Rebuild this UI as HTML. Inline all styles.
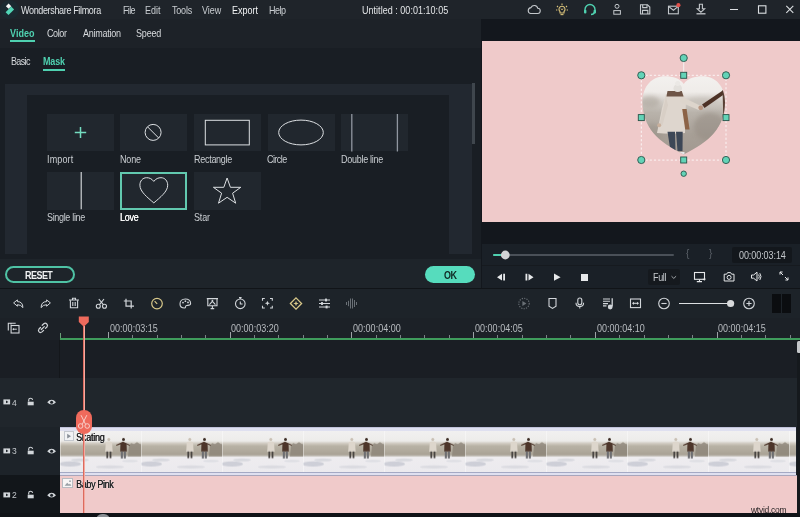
<!DOCTYPE html>
<html><head><meta charset="utf-8">
<style>
*{margin:0;padding:0;box-sizing:border-box}
html,body{width:800px;height:517px;overflow:hidden;background:#1b2026;font-family:"Liberation Sans", sans-serif;color:#d0d4d8}
.a{position:absolute}
.t{position:absolute;white-space:nowrap;line-height:1;will-change:transform;transform:scaleY(1.12);transform-origin:0 0}
svg{position:absolute;overflow:visible}
</style></head><body>
<div class="a" style="left:0px;top:0px;width:800px;height:19px;background:#1f242a;"></div>
<svg style="left:0px;top:0px" width="20" height="19" viewBox="0 0 20 19"><circle cx="9.5" cy="9.5" r="9.5" fill="#1b2930"/><path d="M8.6 3.6 L11.3 6.2 L8.6 8.8 L5.9 6.2 Z" fill="#f4f6f6"/><path d="M11.2 6.6 L14.1 9.4 L8.5 15 L5.6 12.2 Z" fill="#52d6b6"/></svg>
<div class="t" style="left:20.80px;top:5.60px;font-size:9px;color:#dfe2e5;font-weight:400;letter-spacing:-0.346px;">Wondershare Filmora</div>
<div class="t" style="left:122.60px;top:5.60px;font-size:9px;color:#c9cdd1;font-weight:400;letter-spacing:-0.654px;">File</div>
<div class="t" style="left:145.10px;top:5.60px;font-size:9px;color:#c9cdd1;font-weight:400;letter-spacing:-0.029px;">Edit</div>
<div class="t" style="left:171.50px;top:5.60px;font-size:9px;color:#c9cdd1;font-weight:400;letter-spacing:-0.203px;">Tools</div>
<div class="t" style="left:202.10px;top:5.60px;font-size:9px;color:#c9cdd1;font-weight:400;letter-spacing:-0.015px;">View</div>
<div class="t" style="left:231.70px;top:5.60px;font-size:9px;color:#f2f4f5;font-weight:400;letter-spacing:0.014px;">Export</div>
<div class="t" style="left:268.50px;top:5.60px;font-size:9px;color:#c9cdd1;font-weight:400;letter-spacing:-0.529px;">Help</div>
<div class="t" style="left:362.45px;top:5.60px;font-size:9px;color:#e4e6e8;font-weight:400;letter-spacing:0.029px;">Untitled : 00:01:10:05</div>
<svg style="left:526px;top:3px" width="16" height="13" viewBox="0 0 16 13"><path d="M4.5 10.5 H11.5 A2.6 2.6 0 0 0 11.8 5.3 A3.6 3.6 0 0 0 5 4.6 A3 3 0 0 0 4.5 10.5 Z" fill="none" stroke="#c4c8cc" stroke-width="1.1"/></svg>
<svg style="left:554px;top:2px" width="16" height="14" viewBox="0 0 16 14"><g stroke="#d9c27a" stroke-width="1.1" fill="none"><path d="M6 11 V9.5 A3 3 0 1 1 10 9.5 V11 Z"/><path d="M6.5 12.6 H9.5"/><path d="M8 1.5 V3 M3 4 L4 5 M13 4 L12 5 M2 8 H3.3 M12.7 8 H14"/></g><path d="M7 6.5 L8 8 L9 6.5" stroke="#d9c27a" stroke-width="0.8" fill="none"/></svg>
<svg style="left:582px;top:3px" width="16" height="13" viewBox="0 0 16 13"><g stroke="#4fd1b0" stroke-width="1.4" fill="none"><path d="M3 8 V6.5 A5 5 0 0 1 13 6.5 V8"/><path d="M12.5 9 Q12 11.5 9 11.5"/></g><rect x="2" y="6.8" width="2.4" height="3.6" rx="1" fill="#4fd1b0"/><rect x="11.6" y="6.8" width="2.4" height="3.6" rx="1" fill="#4fd1b0"/></svg>
<svg style="left:611px;top:3px" width="12" height="13" viewBox="0 0 12 13"><g stroke="#c4c8cc" stroke-width="1" fill="none"><circle cx="6" cy="3.3" r="2"/><rect x="2.8" y="7.6" width="6.6" height="3.6"/></g></svg>
<svg style="left:638px;top:3px" width="14" height="13" viewBox="0 0 14 13"><g stroke="#c4c8cc" stroke-width="1.1" fill="none"><path d="M2.5 1.8 H9.5 L11.8 4 V11 H2.5 Z"/><path d="M4.7 1.8 V4.6 H9 V1.8"/><path d="M4.5 11 V7.4 H9.8 V11"/></g></svg>
<svg style="left:666px;top:2px" width="16" height="14" viewBox="0 0 16 14"><g stroke="#c4c8cc" stroke-width="1.1" fill="none"><rect x="2.5" y="4.2" width="9.8" height="7.6"/><path d="M2.5 4.4 L7.4 8.3 L12.3 4.4"/></g><circle cx="12.4" cy="3.2" r="2.1" fill="#e0504a"/></svg>
<svg style="left:694px;top:2px" width="14" height="14" viewBox="0 0 14 14"><g stroke="#c4c8cc" stroke-width="1.1" fill="none"><path d="M5.4 2.2 V6.8 H3.2 L6.9 10.2 L10.6 6.8 H8.4 V2.2 Z"/><path d="M2.5 11.8 H11.5" stroke-width="1.3"/></g></svg>
<div class="a" style="left:730px;top:9px;width:8px;height:1.3px;background:#dcdfe2;"></div>
<svg style="left:756px;top:4px" width="12" height="12" viewBox="0 0 12 12"><rect x="2.5" y="1.8" width="7.4" height="7.4" fill="none" stroke="#dcdfe2" stroke-width="1.1"/></svg>
<svg style="left:784px;top:4px" width="12" height="12" viewBox="0 0 12 12"><path d="M2.3 1.8 L9.3 8.8 M9.3 1.8 L2.3 8.8" stroke="#dcdfe2" stroke-width="1.1"/></svg>
<div class="a" style="left:0px;top:19px;width:481px;height:28.5px;background:#1d2228;"></div>
<div class="a" style="left:0px;top:47.5px;width:481px;height:211.5px;background:#191e24;"></div>
<div class="t" style="left:9.90px;top:28.60px;font-size:9px;color:#4fd1b0;font-weight:700;letter-spacing:0.051px;">Video</div>
<div class="a" style="left:10px;top:40px;width:25px;height:2px;background:#4fd1b0;"></div>
<div class="t" style="left:46.90px;top:28.60px;font-size:9px;color:#d6d9dc;font-weight:400;letter-spacing:-0.403px;">Color</div>
<div class="t" style="left:82.60px;top:28.60px;font-size:9px;color:#d6d9dc;font-weight:400;letter-spacing:-0.237px;">Animation</div>
<div class="t" style="left:135.70px;top:28.60px;font-size:9px;color:#d6d9dc;font-weight:400;letter-spacing:-0.166px;">Speed</div>
<div class="t" style="left:11.40px;top:56.60px;font-size:9px;color:#d6d9dc;font-weight:400;letter-spacing:-0.643px;">Basic</div>
<div class="t" style="left:43.30px;top:56.60px;font-size:9px;color:#4fd1b0;font-weight:700;letter-spacing:-0.129px;">Mask</div>
<div class="a" style="left:43px;top:69px;width:22px;height:1.6px;background:#4fd1b0;"></div>
<div class="a" style="left:5px;top:84px;width:467px;height:170px;background:#222830;"></div>
<div class="a" style="left:27px;top:94.5px;width:422px;height:159.5px;background:#191e24;"></div>
<div class="a" style="left:472px;top:83px;width:2.6px;height:61px;background:#3f464d;"></div>
<div class="a" style="left:46.5px;top:114px;width:67px;height:37.4px;background:#21272e;"></div>
<div class="a" style="left:120.2px;top:114px;width:67px;height:37.4px;background:#21272e;"></div>
<div class="a" style="left:194.2px;top:114px;width:67px;height:37.4px;background:#21272e;"></div>
<div class="a" style="left:267.8px;top:114px;width:67px;height:37.4px;background:#21272e;"></div>
<div class="a" style="left:341px;top:114px;width:67px;height:37.4px;background:#21272e;"></div>
<div class="a" style="left:46.5px;top:172.3px;width:67px;height:37.6px;background:#21272e;"></div>
<div class="a" style="left:120.2px;top:172.3px;width:67px;height:37.6px;background:#21272e;"></div>
<div class="a" style="left:194.2px;top:172.3px;width:67px;height:37.6px;background:#21272e;"></div>
<svg style="left:46.5px;top:114px" width="67" height="37" viewBox="0 0 67 37"><path d="M33.5 13 V24 M27.8 18.5 H39.2" stroke="#74dcc0" stroke-width="1.5"/></svg>
<svg style="left:120.2px;top:114px" width="67" height="37" viewBox="0 0 67 37"><circle cx="33.1" cy="18.4" r="8" fill="none" stroke="#dde0e3" stroke-width="1"/><path d="M27.6 12.9 L38.6 23.9" stroke="#dde0e3" stroke-width="1"/></svg>
<svg style="left:194.2px;top:114px" width="67" height="37" viewBox="0 0 67 37"><rect x="11.3" y="6.3" width="44" height="24.6" fill="none" stroke="#dde0e3" stroke-width="1"/></svg>
<svg style="left:267.8px;top:114px" width="67" height="37" viewBox="0 0 67 37"><ellipse cx="33" cy="18.5" rx="22.3" ry="12.4" fill="none" stroke="#dde0e3" stroke-width="1"/></svg>
<svg style="left:341px;top:114px" width="67" height="37" viewBox="0 0 67 37"><path d="M10.8 0 V37.4 M56.4 0 V37.4" stroke="#9096a0" stroke-width="1.3"/></svg>
<svg style="left:46.5px;top:172.3px" width="67" height="37" viewBox="0 0 67 37"><path d="M34.2 0 V37.2" stroke="#dde0e3" stroke-width="1.1"/></svg>
<div class="a" style="left:120.2px;top:172.3px;width:67px;height:37.6px;background:#21272e;border:2px solid #62c9af"></div>
<svg style="left:120.2px;top:172.3px" width="67" height="37" viewBox="0 0 67 37"><path d="M33.8 9.4 C31.8 6.6 29.2 5.7 26.6 5.7 C22.6 5.7 19.9 9 19.9 13.2 C19.9 19.6 27.4 25.4 33.8 30.9 C40.2 25.4 47.7 19.6 47.7 13.2 C47.7 9 45 5.7 41 5.7 C38.4 5.7 35.8 6.6 33.8 9.4 Z" fill="none" stroke="#dde0e3" stroke-width="1"/></svg>
<svg style="left:194.2px;top:172.3px" width="67" height="37" viewBox="0 0 67 37"><path d="M33.1 6 L36.4 15.3 L46.8 15.3 L38.6 21.2 L41.7 31.2 L33.1 25.3 L24.5 31.2 L27.6 21.2 L19.4 15.3 L29.8 15.3 Z" fill="none" stroke="#dde0e3" stroke-width="1"/></svg>
<div class="t" style="left:46.70px;top:154.60px;font-size:9px;color:#c9cdd1;font-weight:400;letter-spacing:0.131px;">Import</div>
<div class="t" style="left:120.20px;top:154.60px;font-size:9px;color:#c9cdd1;font-weight:400;letter-spacing:-0.129px;">None</div>
<div class="t" style="left:193.50px;top:154.60px;font-size:9px;color:#c9cdd1;font-weight:400;letter-spacing:-0.281px;">Rectangle</div>
<div class="t" style="left:267.40px;top:154.60px;font-size:9px;color:#c9cdd1;font-weight:400;letter-spacing:-0.569px;">Circle</div>
<div class="t" style="left:340.80px;top:154.60px;font-size:9px;color:#c9cdd1;font-weight:400;letter-spacing:-0.276px;">Double line</div>
<div class="t" style="left:46.70px;top:212.60px;font-size:9px;color:#c9cdd1;font-weight:400;letter-spacing:-0.330px;">Single line</div>
<div class="t" style="left:120.00px;top:212.60px;font-size:9px;color:#ffffff;font-weight:400;letter-spacing:-0.258px;text-shadow:0 0 0.2px #fff">Love</div>
<div class="t" style="left:193.50px;top:212.60px;font-size:9px;color:#c9cdd1;font-weight:400;letter-spacing:-0.154px;">Star</div>
<div class="a" style="left:0px;top:259px;width:481px;height:29px;background:#1e242a;"></div>
<div class="a" style="left:4.5px;top:266px;width:70px;height:16.5px;background:transparent;border:2px solid #4fc3a5;border-radius:9px"></div>
<div class="t" style="left:25.45px;top:270.60px;font-size:9px;color:#f0f2f3;font-weight:700;letter-spacing:-0.543px;">RESET</div>
<div class="a" style="left:424.8px;top:265.9px;width:50.4px;height:16.9px;background:#56dcbd;border-radius:9px"></div>
<div class="t" style="left:443.60px;top:270.60px;font-size:9px;color:#0f2a24;font-weight:700;letter-spacing:-0.450px;">OK</div>
<div class="a" style="left:481px;top:19px;width:319px;height:270px;background:#13171d;"></div>
<div class="a" style="left:482px;top:41px;width:318px;height:181px;background:#efcaca;"></div>
<div class="a" style="left:482px;top:244px;width:318px;height:44px;background:#1a2027;"></div>
<div class="a" style="left:482px;top:265px;width:318px;height:1px;background:#161a1f;"></div>
<div class="a" style="left:493px;top:254px;width:181px;height:2px;background:#4a5058;border-radius:1px"></div>
<div class="a" style="left:493px;top:254px;width:12px;height:2px;background:#4fd1b0;border-radius:1px"></div>
<svg style="left:500px;top:250px" width="11" height="11" viewBox="0 0 11 11"><circle cx="5.3" cy="5" r="4.4" fill="#d2d4d6"/></svg>
<div class="t" style="left:685.70px;top:248.40px;font-size:10px;color:#5a6068;font-weight:400;letter-spacing:1.456px;">{</div>
<div class="t" style="left:708.70px;top:248.40px;font-size:10px;color:#5a6068;font-weight:400;letter-spacing:1.456px;">}</div>
<div class="a" style="left:731.6px;top:247px;width:60.4px;height:15.5px;background:#13171c;border-radius:2px"></div>
<div class="t" style="left:738.70px;top:250.60px;font-size:9px;color:#c4c8cc;font-weight:400;letter-spacing:-0.068px;">00:00:03:14</div>
<svg style="left:496px;top:273px" width="12" height="9" viewBox="0 0 12 9"><path d="M1 4.2 L6 0.8 V7.6 Z M7.2 0.8 H9 V7.6 H7.2 Z" fill="#e6e8ea"/></svg>
<svg style="left:525px;top:273px" width="12" height="9" viewBox="0 0 12 9"><path d="M0.5 0.8 H2.3 V7.6 H0.5 Z M3.5 0.8 L8.5 4.2 L3.5 7.6 Z" fill="#e6e8ea"/></svg>
<svg style="left:553px;top:273px" width="10" height="9" viewBox="0 0 10 9"><path d="M1 0.6 L7.6 4.2 L1 7.8 Z" fill="#e6e8ea"/></svg>
<div class="a" style="left:581px;top:273.5px;width:7.2px;height:7.2px;background:#e6e8ea;"></div>
<div class="a" style="left:648px;top:269px;width:32px;height:16px;background:#15191e;border-radius:2px"></div>
<div class="t" style="left:653.30px;top:272.60px;font-size:9px;color:#c4c8cc;font-weight:400;letter-spacing:-0.329px;">Full</div>
<svg style="left:670px;top:275px" width="8" height="5" viewBox="0 0 8 5"><path d="M1.5 1.2 L3.8 3.4 L6.1 1.2" stroke="#b0b4b8" stroke-width="0.9" fill="none"/></svg>
<svg style="left:693px;top:271px" width="14" height="12" viewBox="0 0 14 12"><g stroke="#e6e8ea" stroke-width="1.1" fill="none"><rect x="1.5" y="1.5" width="10" height="6.8"/><path d="M6.5 8.4 V10.4 M3.8 10.6 H9"/></g><path d="M9.6 7.8 L13 7.8 L11.3 9.8 Z" fill="#e6e8ea"/></svg>
<svg style="left:723px;top:271px" width="12" height="11" viewBox="0 0 12 11"><g stroke="#e6e8ea" stroke-width="1" fill="none"><path d="M1.2 3.2 H3.6 L4.6 1.6 H7.6 L8.6 3.2 H11 V10 H1.2 Z"/><circle cx="6.1" cy="6.4" r="2"/></g></svg>
<svg style="left:750px;top:271px" width="12" height="11" viewBox="0 0 12 11"><g stroke="#e6e8ea" stroke-width="1" fill="none"><path d="M1.5 4 H3.6 L7 1.2 V10 L3.6 7.2 H1.5 Z"/><path d="M8.6 3.6 Q10 5.6 8.6 7.6 M9.8 2.2 Q12.2 5.6 9.8 9"/></g></svg>
<svg style="left:778px;top:270px" width="12" height="12" viewBox="0 0 12 12"><g stroke="#e6e8ea" stroke-width="1" fill="none"><path d="M2 2 L5 5 M2 2 H4.6 M2 2 V4.6 M10 10 L7 7 M10 10 H7.4 M10 10 V7.4"/></g></svg>
<svg style="left:638px;top:72px" width="92" height="90" viewBox="0 0 92 90">
<defs>
<clipPath id="hc"><path d="M45.75 12 C42 6.2 35 4.2 27 4.2 C14 4.2 4.5 14 4.5 30 C4.5 55 20 70 45.75 82.4 C71.5 70 87 55 87 30 C87 14 77.5 4.2 64.5 4.2 C56.5 4.2 49.5 6.2 45.75 12 Z"/></clipPath>
<linearGradient id="sky" x1="0" y1="0" x2="0" y2="1"><stop offset="0" stop-color="#f4f2f0"/><stop offset="0.22" stop-color="#efece9"/><stop offset="0.33" stop-color="#d3cec8"/><stop offset="0.45" stop-color="#b9b3ab"/><stop offset="0.7" stop-color="#a79f96"/><stop offset="1" stop-color="#a0978e"/></linearGradient>
<filter id="bl" x="-20%" y="-20%" width="140%" height="140%"><feGaussianBlur stdDeviation="0.6"/></filter>
<filter id="bl2" x="-50%" y="-50%" width="200%" height="200%"><feGaussianBlur stdDeviation="2.2"/></filter>
</defs>
<g clip-path="url(#hc)">
<rect x="0" y="0" width="92" height="90" fill="url(#sky)"/>
<g filter="url(#bl2)" opacity="0.6"><ellipse cx="12" cy="30" rx="10" ry="6" fill="#aca59c"/><ellipse cx="64" cy="29" rx="16" ry="4" fill="#c0bab3"/><ellipse cx="72" cy="55" rx="16" ry="14" fill="#978e85"/><ellipse cx="14" cy="62" rx="10" ry="10" fill="#9c948b"/></g>
<g filter="url(#bl)">
<path d="M28 22 Q36 20 45 22 L48 27 L47 61 Q33 62.5 19 61 L24 36 Z" fill="#ded6ce"/>
<path d="M28 25 L21.5 52 L24.5 53 L30 33 Z" fill="#d8cfc6"/>
<circle cx="21.2" cy="53.2" r="2" fill="#c9b09c"/>
<path d="M43.5 24.5 L63 34 L61.3 38.2 L42 30 Z" fill="#ddd5cc"/>
<path d="M29.5 19 L43.8 19 L45.5 24.5 L28.5 24.5 Z" fill="#6e5446"/>
<ellipse cx="39.7" cy="16.2" rx="4.2" ry="3.8" fill="#e3e0dc"/>
<circle cx="39.7" cy="11.4" r="2.5" fill="#ebe8e5"/>
<path d="M44.2 37 L48.6 37 L51.6 57.5 L47.2 57.5 Z" fill="#8c6446"/>
<path d="M29.5 59.7 L37 59.7 L37.5 79 L32.5 79 Z M38 59.7 L44.7 59.7 L44.5 79 L39.5 79 Z" fill="#3d4656"/>
<path d="M40 80 L46.5 80 L46.5 84 L40 84 Z" fill="#e6e6e8"/>
<path d="M85.5 18 L88 21 L66.5 36 L64 32.5 Z" fill="#4e3328"/>
<path d="M84.5 18 L89 18 L89 52 L85.5 52 Z" fill="#5a4035"/>
<circle cx="62.7" cy="35.8" r="2.4" fill="#b99580"/>
</g>
</g>
</svg>
<svg style="left:630px;top:50px" width="110" height="130" viewBox="0 0 110 130">
<rect x="11.3" y="25.3" width="84.7" height="84.8" fill="none" stroke="#ffffff" stroke-width="0.9" stroke-dasharray="2.2 2" opacity="0.9"/>
<path d="M53.7 8 V25" stroke="#f5f5f5" stroke-width="0.9"/>
<g fill="#63d3b7" stroke="#275449" stroke-width="0.9">
<circle cx="11.3" cy="25.3" r="3.6"/><circle cx="96" cy="25.3" r="3.6"/><circle cx="11.3" cy="110" r="3.6"/><circle cx="96" cy="110" r="3.6"/>
<circle cx="53.7" cy="8" r="3.6"/><circle cx="53.7" cy="123.7" r="2.7"/>
<rect x="50.7" y="22.3" width="6" height="6"/><rect x="50.7" y="107" width="6" height="6"/>
<rect x="8.3" y="64.6" width="6" height="6"/><rect x="93" y="64.6" width="6" height="6"/>
</g></svg>
<div class="a" style="left:0px;top:288px;width:800px;height:1px;background:#111418;"></div>
<div class="a" style="left:0px;top:289px;width:800px;height:29px;background:#1d2329;"></div>
<svg style="left:12px;top:299px" width="13" height="10" viewBox="0 0 13 10"><path d="M1.6 3.9 L5.4 0.9 V2.6 Q10.8 2.6 10.9 8.6 Q9 5.7 5.4 5.7 V7.2 Z" stroke="#d2d6da" stroke-width="1" fill="none" stroke-linejoin="round"/></svg>
<svg style="left:39px;top:299px" width="13" height="10" viewBox="0 0 13 10"><path d="M11.4 3.9 L7.6 0.9 V2.6 Q2.2 2.6 2.1 8.6 Q4 5.7 7.6 5.7 V7.2 Z" stroke="#d2d6da" stroke-width="1" fill="none" stroke-linejoin="round"/></svg>
<svg style="left:68px;top:297px" width="12" height="12" viewBox="0 0 12 12"><g stroke="#d2d6da" stroke-width="1.1" fill="none"><path d="M1 3 H11 M4.5 3 V1.3 H7.5 V3"/><path d="M2.4 3.2 V10.8 H9.6 V3.2"/><path d="M4.8 5 V9 M7.2 5 V9"/></g></svg>
<svg style="left:95px;top:298px" width="13" height="11" viewBox="0 0 13 11"><g stroke="#d2d6da" stroke-width="1.1" fill="none"><circle cx="3.3" cy="8.2" r="2"/><circle cx="9.5" cy="8.2" r="2"/><path d="M4.5 6.6 L9 1 M8.3 6.6 L3.8 1"/></g></svg>
<svg style="left:123px;top:298px" width="12" height="11" viewBox="0 0 12 11"><g stroke="#d2d6da" stroke-width="1.2" fill="none"><path d="M3 0.8 V8.2 H11 M0.8 3 H8.2 V10.5"/></g></svg>
<svg style="left:150px;top:297px" width="14" height="13" viewBox="0 0 14 13"><g stroke="#d9c98a" stroke-width="1.2" fill="none"><circle cx="7" cy="6.6" r="5.3"/><path d="M4.6 4.2 L7.2 6.8"/></g></svg>
<svg style="left:179px;top:298px" width="13" height="11" viewBox="0 0 13 11"><g stroke="#d2d6da" stroke-width="1.1" fill="none"><path d="M6.4 1 C3 1 1 3.3 1 6 C1 8.6 3 10 5.6 10 C7 10 6.2 8.2 7.2 7.6 C8.2 7 11.6 8.2 11.6 5.4 C11.6 2.8 9.4 1 6.4 1 Z"/></g><circle cx="4" cy="4.6" r="0.9" fill="#d2d6da"/><circle cx="6.4" cy="3.2" r="0.9" fill="#d2d6da"/><circle cx="9" cy="4.4" r="0.9" fill="#d2d6da"/></svg>
<svg style="left:206px;top:297px" width="13" height="13" viewBox="0 0 13 13"><g stroke="#d2d6da" stroke-width="1.1" fill="none"><path d="M0.8 1.6 H12 M1.8 1.6 V8.8 H11 V1.6"/><path d="M6.4 9 V11.6 M4.6 11.6 H8.2"/><path d="M3.4 7.6 L6.4 4.4 L9.4 7.6"/></g><circle cx="6.4" cy="3.6" r="0.9" fill="#d2d6da"/></svg>
<svg style="left:234px;top:296px" width="13" height="14" viewBox="0 0 13 14"><g stroke="#d2d6da" stroke-width="1.1" fill="none"><circle cx="6.3" cy="7.8" r="4.8"/><path d="M5 1.6 H7.6 M6.3 1.6 V3 M6.3 5.4 V8 H8.6"/></g></svg>
<svg style="left:261px;top:297px" width="13" height="12" viewBox="0 0 13 12"><g stroke="#d2d6da" stroke-width="1.1" fill="none"><path d="M1.5 3.8 V1.5 H3.8 M9 1.5 H11.3 V3.8 M11.3 8.8 V11 H9 M3.8 11 H1.5 V8.8"/></g><path d="M6.4 3.8 L7.1 5.6 L8.9 6.3 L7.1 7 L6.4 8.8 L5.7 7 L3.9 6.3 L5.7 5.6 Z" fill="#d2d6da"/></svg>
<svg style="left:289px;top:297px" width="14" height="13" viewBox="0 0 14 13"><path d="M7 0.9 L12.6 6.5 L7 12.1 L1.4 6.5 Z" stroke="#d9c98a" stroke-width="1.3" fill="none"/><path d="M7 3.8 L7.7 5.8 L9.7 6.5 L7.7 7.2 L7 9.2 L6.3 7.2 L4.3 6.5 L6.3 5.8 Z" fill="#d9c98a"/></svg>
<svg style="left:318px;top:298px" width="13" height="11" viewBox="0 0 13 11"><g stroke="#d2d6da" stroke-width="1.1"><path d="M1 2 H12 M1 5.5 H12 M1 9 H12"/></g><g fill="#d2d6da"><rect x="7" y="0.6" width="2" height="2.8"/><rect x="3" y="4.1" width="2" height="2.8"/><rect x="7.6" y="7.6" width="2" height="2.8"/></g></svg>
<svg style="left:345px;top:297px" width="13" height="13" viewBox="0 0 13 13"><g stroke="#6a7076" stroke-width="1"><path d="M1.5 5 V8 M3.5 3.8 V9.2 M5.5 1.5 V11.5 M7.5 1.5 V11.5 M9.5 3 V10 M11.5 5 V8"/></g></svg>
<svg style="left:517px;top:297px" width="14" height="13" viewBox="0 0 14 13"><circle cx="7" cy="6.5" r="5.2" stroke="#6a7076" stroke-width="1.1" stroke-dasharray="1.2 1.2" fill="none"/><path d="M5.4 4.1 L9.4 6.5 L5.4 8.9 Z" fill="#6a7076"/></svg>
<svg style="left:547px;top:297px" width="11" height="13" viewBox="0 0 11 13"><path d="M2 1.5 H9 V9.2 L5.5 11.4 L2 9.2 Z" stroke="#d2d6da" stroke-width="1.1" fill="none"/></svg>
<svg style="left:574px;top:297px" width="12" height="13" viewBox="0 0 12 13"><g stroke="#d2d6da" stroke-width="1.1" fill="none"><rect x="3.8" y="1" width="4" height="6.8" rx="2"/><path d="M2 5.8 Q2 9.6 5.8 9.6 Q9.6 9.6 9.6 5.8 M5.8 9.6 V11.5"/></g></svg>
<svg style="left:602px;top:297px" width="12" height="13" viewBox="0 0 12 13"><g stroke="#d2d6da" stroke-width="1.1"><path d="M1 2 H8 M1 4.3 H8 M1 6.6 H6 M1 8.9 H4.5"/><path d="M10.2 1.2 V9.5" stroke-width="1.3"/></g><circle cx="8.2" cy="10" r="2.4" fill="#d2d6da"/></svg>
<svg style="left:629px;top:297px" width="13" height="13" viewBox="0 0 13 13"><g stroke="#d2d6da" stroke-width="1.1" fill="none"><rect x="1.5" y="2" width="10" height="8.6"/></g><path d="M3.6 6.3 H9.4" stroke="#d2d6da" stroke-width="1.1"/><path d="M3.2 6.3 L5 4.7 V7.9 Z M9.8 6.3 L8 4.7 V7.9 Z" fill="#d2d6da"/></svg>
<svg style="left:657px;top:297px" width="14" height="14" viewBox="0 0 14 14"><circle cx="7" cy="6.5" r="5.3" stroke="#d2d6da" stroke-width="1.1" fill="none"/><path d="M4.4 6.5 H9.6" stroke="#d2d6da" stroke-width="1.1"/></svg>
<div class="a" style="left:679px;top:302.5px;width:52px;height:1.3px;background:#dcdfe2;"></div>
<svg style="left:726px;top:299px" width="9" height="9" viewBox="0 0 9 9"><circle cx="4.6" cy="4.5" r="3.6" fill="#d8dadc"/></svg>
<svg style="left:742px;top:297px" width="14" height="14" viewBox="0 0 14 14"><circle cx="7" cy="6.5" r="5.3" stroke="#d2d6da" stroke-width="1.1" fill="none"/><path d="M4.4 6.5 H9.6 M7 3.9 V9.1" stroke="#d2d6da" stroke-width="1.1"/></svg>
<div class="a" style="left:772px;top:293.8px;width:9.3px;height:19px;background:#0b0d10;"></div>
<div class="a" style="left:782.3px;top:293.8px;width:9px;height:19px;background:#0b0d10;"></div>
<div class="a" style="left:0px;top:318px;width:800px;height:22px;background:#1c2127;"></div>
<svg style="left:6px;top:321px" width="16" height="14" viewBox="0 0 16 14"><g stroke="#d2d6da" stroke-width="1.1" fill="none"><path d="M5 3.5 V2.3 H9.7 M2.3 9.6 V2.3 H5"/><rect x="5.1" y="4.5" width="7.9" height="7.5" fill="#1b2026"/></g><path d="M6.8 8.2 H10.8" stroke="#d2d6da" stroke-width="1"/><path d="M6.4 8.2 L8 7 V9.4 Z" fill="#d2d6da"/></svg>
<svg style="left:37px;top:322px" width="12" height="12" viewBox="0 0 12 12"><g stroke="#d2d6da" stroke-width="1.2" fill="none" stroke-linecap="round"><path d="M5.2 3.3 L6.8 1.8 Q8.4 0.6 9.8 2 Q11.2 3.4 9.9 5 L8.4 6.4"/><path d="M3.5 5.5 L2 7 Q0.8 8.6 2.1 9.9 Q3.5 11.2 5 9.9 L6.6 8.4"/><path d="M4.3 7.5 L7.3 4.6"/></g></svg>
<div class="a" style="left:60px;top:338px;width:740px;height:1.6px;background:#3f9c5c;"></div>
<div class="a" style="left:107.8px;top:332px;width:1.1px;height:6px;background:#9ea3a8;"></div>
<div class="a" style="left:132.15px;top:334.5px;width:1px;height:3.3px;background:#7d8388;"></div>
<div class="a" style="left:156.5px;top:334.5px;width:1px;height:3.3px;background:#7d8388;"></div>
<div class="a" style="left:180.85000000000002px;top:334.5px;width:1px;height:3.3px;background:#7d8388;"></div>
<div class="a" style="left:205.2px;top:334.5px;width:1px;height:3.3px;background:#7d8388;"></div>
<div class="t" style="left:109.50px;top:323.60px;font-size:9px;color:#b8bcc0;font-weight:400;letter-spacing:0.023px;">00:00:03:15</div>
<div class="a" style="left:229.55px;top:332px;width:1.1px;height:6px;background:#9ea3a8;"></div>
<div class="a" style="left:253.9px;top:334.5px;width:1px;height:3.3px;background:#7d8388;"></div>
<div class="a" style="left:278.25px;top:334.5px;width:1px;height:3.3px;background:#7d8388;"></div>
<div class="a" style="left:302.6px;top:334.5px;width:1px;height:3.3px;background:#7d8388;"></div>
<div class="a" style="left:326.95000000000005px;top:334.5px;width:1px;height:3.3px;background:#7d8388;"></div>
<div class="t" style="left:231.25px;top:323.60px;font-size:9px;color:#b8bcc0;font-weight:400;letter-spacing:0.023px;">00:00:03:20</div>
<div class="a" style="left:351.3px;top:332px;width:1.1px;height:6px;background:#9ea3a8;"></div>
<div class="a" style="left:375.65000000000003px;top:334.5px;width:1px;height:3.3px;background:#7d8388;"></div>
<div class="a" style="left:400.0px;top:334.5px;width:1px;height:3.3px;background:#7d8388;"></div>
<div class="a" style="left:424.35px;top:334.5px;width:1px;height:3.3px;background:#7d8388;"></div>
<div class="a" style="left:448.70000000000005px;top:334.5px;width:1px;height:3.3px;background:#7d8388;"></div>
<div class="t" style="left:353.00px;top:323.60px;font-size:9px;color:#b8bcc0;font-weight:400;letter-spacing:0.023px;">00:00:04:00</div>
<div class="a" style="left:473.05px;top:332px;width:1.1px;height:6px;background:#9ea3a8;"></div>
<div class="a" style="left:497.40000000000003px;top:334.5px;width:1px;height:3.3px;background:#7d8388;"></div>
<div class="a" style="left:521.75px;top:334.5px;width:1px;height:3.3px;background:#7d8388;"></div>
<div class="a" style="left:546.1px;top:334.5px;width:1px;height:3.3px;background:#7d8388;"></div>
<div class="a" style="left:570.45px;top:334.5px;width:1px;height:3.3px;background:#7d8388;"></div>
<div class="t" style="left:474.75px;top:323.60px;font-size:9px;color:#b8bcc0;font-weight:400;letter-spacing:0.023px;">00:00:04:05</div>
<div class="a" style="left:594.8px;top:332px;width:1.1px;height:6px;background:#9ea3a8;"></div>
<div class="a" style="left:619.15px;top:334.5px;width:1px;height:3.3px;background:#7d8388;"></div>
<div class="a" style="left:643.5px;top:334.5px;width:1px;height:3.3px;background:#7d8388;"></div>
<div class="a" style="left:667.8499999999999px;top:334.5px;width:1px;height:3.3px;background:#7d8388;"></div>
<div class="a" style="left:692.1999999999999px;top:334.5px;width:1px;height:3.3px;background:#7d8388;"></div>
<div class="t" style="left:596.50px;top:323.60px;font-size:9px;color:#b8bcc0;font-weight:400;letter-spacing:0.023px;">00:00:04:10</div>
<div class="a" style="left:716.55px;top:332px;width:1.1px;height:6px;background:#9ea3a8;"></div>
<div class="a" style="left:740.9px;top:334.5px;width:1px;height:3.3px;background:#7d8388;"></div>
<div class="a" style="left:765.25px;top:334.5px;width:1px;height:3.3px;background:#7d8388;"></div>
<div class="a" style="left:789.5999999999999px;top:334.5px;width:1px;height:3.3px;background:#7d8388;"></div>
<div class="a" style="left:813.9499999999999px;top:334.5px;width:1px;height:3.3px;background:#7d8388;"></div>
<div class="t" style="left:718.25px;top:323.60px;font-size:9px;color:#b8bcc0;font-weight:400;letter-spacing:0.023px;">00:00:04:15</div>
<div class="a" style="left:59.5px;top:334.5px;width:1px;height:3.3px;background:#7d8388;"></div>
<div class="a" style="left:83.4px;top:334.5px;width:1px;height:3.3px;background:#7d8388;"></div>
<div class="a" style="left:60px;top:333px;width:1px;height:5px;background:#6a9f78;"></div>
<div class="a" style="left:0px;top:340px;width:797px;height:38px;background:#1a1e24;"></div>
<div class="a" style="left:59px;top:340px;width:1px;height:38px;background:#14171b;"></div>
<div class="a" style="left:0px;top:378px;width:797px;height:49px;background:#20262c;"></div>
<div class="a" style="left:0px;top:427px;width:60px;height:48px;background:#1d2329;"></div>
<div class="a" style="left:0px;top:475px;width:60px;height:38px;background:#12161a;"></div>
<div class="a" style="left:797px;top:340px;width:3px;height:173px;background:#15191d;"></div>
<div class="a" style="left:797px;top:340.5px;width:3px;height:12.2px;background:#c4c7ca;border-radius:1.5px 0 0 1.5px"></div>
<div class="a" style="left:0px;top:513px;width:800px;height:4px;background:#101317;"></div>
<div class="a" style="left:96px;top:513.5px;width:14px;height:6px;background:#8a8f94;border-radius:7px 7px 0 0"></div>
<svg style="left:2px;top:398.3px" width="10" height="8" viewBox="0 0 10 8"><rect x="1.4" y="1.4" width="6.7" height="5" fill="#d2d6da"/><path d="M4 2.6 L6.4 3.9 L4 5.2 Z" fill="#1d2329"/></svg>
<div class="t" style="left:11.90px;top:397.65px;font-size:8.5px;color:#c4c8cc;font-weight:400;letter-spacing:-0.334px;">4</div>
<svg style="left:26px;top:397.3px" width="9" height="10" viewBox="0 0 9 10"><path d="M2.7 4.6 V3.1 Q2.7 1.3 4.6 1.3 Q6.3 1.3 6.6 2.8" stroke="#d2d6da" stroke-width="1.1" fill="none"/><rect x="1.7" y="4.7" width="6" height="3.6" fill="#d2d6da"/></svg>
<svg style="left:46px;top:398.3px" width="11" height="9" viewBox="0 0 11 9"><path d="M1.2 4.2 Q5.6 -0.6 10 4.2 Q5.6 9 1.2 4.2 Z" fill="#d2d6da"/><circle cx="5.6" cy="4.2" r="1.5" fill="#1d2329"/></svg>
<svg style="left:2px;top:447px" width="10" height="8" viewBox="0 0 10 8"><rect x="1.4" y="1.4" width="6.7" height="5" fill="#d2d6da"/><path d="M4 2.6 L6.4 3.9 L4 5.2 Z" fill="#1d2329"/></svg>
<div class="t" style="left:11.90px;top:446.35px;font-size:8.5px;color:#c4c8cc;font-weight:400;letter-spacing:-0.334px;">3</div>
<svg style="left:26px;top:446px" width="9" height="10" viewBox="0 0 9 10"><path d="M2.7 4.6 V3.1 Q2.7 1.3 4.6 1.3 Q6.3 1.3 6.6 2.8" stroke="#d2d6da" stroke-width="1.1" fill="none"/><rect x="1.7" y="4.7" width="6" height="3.6" fill="#d2d6da"/></svg>
<svg style="left:46px;top:447px" width="11" height="9" viewBox="0 0 11 9"><path d="M1.2 4.2 Q5.6 -0.6 10 4.2 Q5.6 9 1.2 4.2 Z" fill="#d2d6da"/><circle cx="5.6" cy="4.2" r="1.5" fill="#1d2329"/></svg>
<svg style="left:2px;top:491px" width="10" height="8" viewBox="0 0 10 8"><rect x="1.4" y="1.4" width="6.7" height="5" fill="#d2d6da"/><path d="M4 2.6 L6.4 3.9 L4 5.2 Z" fill="#1d2329"/></svg>
<div class="t" style="left:11.90px;top:490.35px;font-size:8.5px;color:#c4c8cc;font-weight:400;letter-spacing:-0.334px;">2</div>
<svg style="left:26px;top:490px" width="9" height="10" viewBox="0 0 9 10"><path d="M2.7 4.6 V3.1 Q2.7 1.3 4.6 1.3 Q6.3 1.3 6.6 2.8" stroke="#d2d6da" stroke-width="1.1" fill="none"/><rect x="1.7" y="4.7" width="6" height="3.6" fill="#d2d6da"/></svg>
<svg style="left:46px;top:491px" width="11" height="9" viewBox="0 0 11 9"><path d="M1.2 4.2 Q5.6 -0.6 10 4.2 Q5.6 9 1.2 4.2 Z" fill="#d2d6da"/><circle cx="5.6" cy="4.2" r="1.5" fill="#1d2329"/></svg>
<div class="a" style="left:60px;top:427px;width:736px;height:48px;background:#dfe0f0;"></div>
<div class="a" style="left:60px;top:427px;width:736px;height:0.8px;background:#c0c2da;"></div>
<svg style="left:60px;top:430.5px" width="736" height="41.5" viewBox="0 0 736 41.5"><defs><linearGradient id="tg" x1="0" y1="0" x2="0" y2="1"><stop offset="0" stop-color="#f1f0f0"/><stop offset="0.24" stop-color="#edecea"/><stop offset="0.29" stop-color="#d4cfc6"/><stop offset="0.36" stop-color="#b8b2a5"/><stop offset="0.56" stop-color="#aaa396"/><stop offset="0.6" stop-color="#bcb7ae"/><stop offset="0.625" stop-color="#eeecef"/><stop offset="1" stop-color="#ebeaee"/></linearGradient><filter id="tb" x="-10%" y="-10%" width="120%" height="120%"><feGaussianBlur stdDeviation="0.5"/></filter><pattern id="thumb" x="0" y="0" width="81" height="41.5" patternUnits="userSpaceOnUse"><rect width="81" height="41.5" fill="url(#tg)"/><g filter="url(#tb)"><path d="M69 15 L71 12 L74 13 L77 11 L80 13 L81 13 V25.5 H68 Z" fill="#8a8175" opacity="0.75"/><ellipse cx="10" cy="33" rx="11" ry="2.6" fill="#b4b8c4" opacity="0.55"/><ellipse cx="20" cy="29" rx="9" ry="1.5" fill="#c4c7d0" opacity="0.5"/><ellipse cx="50" cy="36" rx="14" ry="1.6" fill="#c9ccd4" opacity="0.5"/><ellipse cx="70" cy="30" rx="8" ry="1.2" fill="#cdd0d8" opacity="0.5"/><rect x="0" y="0" width="1" height="41.5" fill="#ffffff" opacity="0.4"/><path d="M45.8 11 Q49 9.6 52 11 L52.6 20.8 L45.2 20.8 Z" fill="#ddd6cc"/><circle cx="48.8" cy="8.4" r="1.5" fill="#c9c0b4"/><path d="M46.4 20.6 H48.2 V27.2 H46.4 Z M49.6 20.6 H51.4 V27.2 H49.6 Z" fill="#4a4442"/><path d="M56 13.8 L63 10.6 L70 13.8 L69.5 14.8 L66.6 13.4 L66.8 20.5 L60.2 20.5 L60.4 13.4 L56.5 14.8 Z" fill="#4d362c"/><circle cx="63.5" cy="8.4" r="1.5" fill="#3c2c26"/><path d="M60.8 20.4 H62.9 V27.4 H60.8 Z M63.8 20.4 H65.9 V27.4 H63.8 Z" fill="#6e6e72"/></g></pattern></defs><rect width="736" height="41.5" fill="url(#thumb)"/></svg>
<div class="a" style="left:63.5px;top:431px;width:10.5px;height:10px;background:#f2f3f5;border:0.6px solid #c4c8ce"></div>
<svg style="left:65px;top:433px" width="8" height="7" viewBox="0 0 8 7"><path d="M2.2 0.8 L6 3.2 L2.2 5.6 Z" fill="#8a9098"/></svg>
<div class="t" style="left:76.10px;top:432.60px;font-size:9px;color:#1e1e20;font-weight:400;letter-spacing:-0.233px;text-shadow:0.35px 0 0 #1e1e20,0 0 1px #fff,0 0 1px #fff">Skating</div>
<div class="a" style="left:60px;top:471.8px;width:736px;height:0.7px;background:#a4a9c4;"></div>
<div class="a" style="left:60px;top:475px;width:737px;height:38px;background:#f0caca;"></div>
<div class="a" style="left:60px;top:474.9px;width:737px;height:0.9px;background:#a8a6bc;"></div>
<div class="a" style="left:62.3px;top:477.5px;width:10.4px;height:10.2px;background:#f8f6f6;border:0.6px solid #b8bcc2"></div>
<svg style="left:63px;top:479px" width="9" height="8" viewBox="0 0 9 8"><path d="M1.6 6.8 L4.2 3.8 L6 5.6 L7 4.6 L8.4 6.8 Z" fill="#9aa0a6"/><circle cx="7" cy="2.2" r="0.9" fill="#9aa0a6"/></svg>
<div class="t" style="left:75.70px;top:479.60px;font-size:9px;color:#1e1e20;font-weight:400;letter-spacing:-0.370px;text-shadow:0.35px 0 0 #1e1e20,0 0 1px #fff,0 0 1px #fff">Baby Pink</div>
<div class="t" style="left:751.00px;top:505.35px;font-size:8.5px;color:#2a2526;font-weight:400;letter-spacing:-0.277px;">wtvid.com</div>
<div class="a" style="left:82.6px;top:326px;width:2.8px;height:187px;background:#dc6a5e;"></div>
<div class="a" style="left:83.5px;top:326px;width:1px;height:187px;background:#f4aaa0;"></div>
<svg style="left:78px;top:316px" width="12" height="12" viewBox="0 0 12 12"><path d="M0.8 0.6 H10.8 V6 L5.8 10.8 L0.8 6 Z" fill="#ee6a5c"/></svg>
<div class="a" style="left:76.3px;top:410px;width:15.6px;height:24.3px;background:#ef6a5c;border-radius:7.8px"></div>
<svg style="left:76px;top:410px" width="16" height="24" viewBox="0 0 16 24"><g stroke="#f8d8d4" stroke-width="0.9" fill="none"><circle cx="4.6" cy="16" r="2.3"/><circle cx="11.2" cy="16" r="2.3"/><path d="M6.3 14.2 L10.8 5.2 M9.5 14.2 L5 5.2"/></g></svg>
</body></html>
